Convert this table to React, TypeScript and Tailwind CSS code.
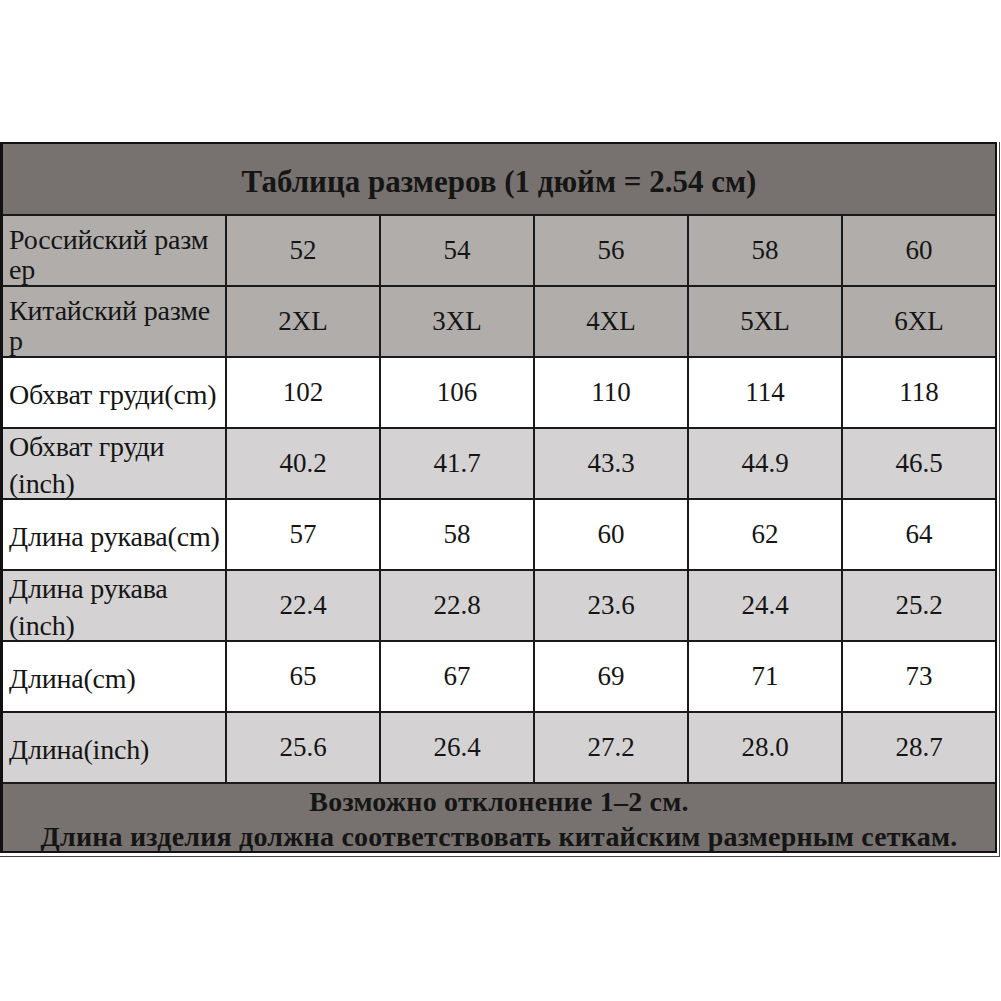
const rows: { label: React.ReactNode; values: string[]; bg: string; tight?: boolean }[] = [
  {
    label: (
      <>
        Российский разм
        <br />
        ер
      </>
    ),
    values: ['52', '54', '56', '58', '60'],
    bg: 'bg-[#b0adab]',
    tight: true,
  },
  {
    label: (
      <>
        Китайский разме
        <br />р
      </>
    ),
    values: ['2XL', '3XL', '4XL', '5XL', '6XL'],
    bg: 'bg-[#b0adab]',
    tight: true,
  },
  { label: 'Обхват груди(cm)', values: ['102', '106', '110', '114', '118'], bg: 'bg-white' },
  { label: 'Обхват груди (inch)', values: ['40.2', '41.7', '43.3', '44.9', '46.5'], bg: 'bg-[#d4d2d3]' },
  { label: 'Длина рукава(cm)', values: ['57', '58', '60', '62', '64'], bg: 'bg-white' },
  { label: 'Длина рукава (inch)', values: ['22.4', '22.8', '23.6', '24.4', '25.2'], bg: 'bg-[#d4d2d3]' },
  { label: 'Длина(cm)', values: ['65', '67', '69', '71', '73'], bg: 'bg-white' },
  { label: 'Длина(inch)', values: ['25.6', '26.4', '27.2', '28.0', '28.7'], bg: 'bg-[#d4d2d3]' },
];

function Row({ label, values, bg, tight }: { label: React.ReactNode; values: string[]; bg: string; tight?: boolean }) {
  return (
    <>
      <div
        className={`${bg} flex items-center pl-[6px] pr-[2px] text-[28px] tracking-[-0.2px] ${tight ? 'leading-[30px] pt-[8px]' : 'leading-[37px] pt-[3px]'}`}
      >
        <div>{label}</div>
      </div>
      {values.map((v, i) => (
        <div key={i} className={`${bg} flex items-center justify-center text-[27px]`}>
          {v}
        </div>
      ))}
    </>
  );
}

export default function App() {
  return (
    <div className="w-[1001px] h-[1001px] bg-white pt-[142px] font-['Liberation_Serif',serif] text-[#151515]">
      <div className="w-[1000px] border-r border-b border-[#444] pr-[2px] pb-[3px]">
        <div className="border-l-[3px] border-t-2 border-r-2 border-b-2 border-[#111]">
          <div className="grid grid-cols-[222px_repeat(5,1fr)] grid-rows-[70px_repeat(8,69px)_67px] gap-[2px] bg-[#1a1a1a]">
            <div className="col-span-6 bg-[#77726f] flex items-center justify-center pt-[6px] text-[31px] font-bold">
              Таблица размеров (1 дюйм = 2.54 см)
            </div>
            {rows.map((r, i) => (
              <Row key={i} {...r} />
            ))}
            <div className="col-span-6 bg-[#77726f] flex flex-col items-center text-[28px] font-bold leading-[35px] tracking-[0.2px]">
              <div>Возможно отклонение 1–2 см.</div>
              <div>Длина изделия должна соответствовать китайским размерным сеткам.</div>
            </div>
          </div>
        </div>
      </div>
    </div>
  );
}
